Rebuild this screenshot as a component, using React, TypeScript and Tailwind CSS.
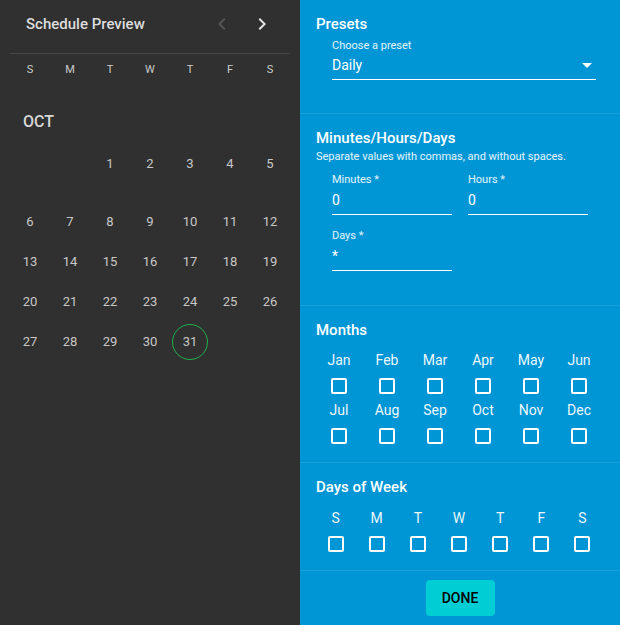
import React from "react";

const weekHeaders = ["S", "M", "T", "W", "T", "F", "S"];
const rows: (number | null)[][] = [
  [null, null, 1, 2, 3, 4, 5],
  [6, 7, 8, 9, 10, 11, 12],
  [13, 14, 15, 16, 17, 18, 19],
  [20, 21, 22, 23, 24, 25, 26],
  [27, 28, 29, 30, 31, null, null],
];
const months = ["Jan", "Feb", "Mar", "Apr", "May", "Jun", "Jul", "Aug", "Sep", "Oct", "Nov", "Dec"];

function Box() {
  return <div className="w-4 h-4 border-2 border-white rounded-[2px]" />;
}

function Field({ label, value, className }: { label: string; value: string; className?: string }) {
  return (
    <div className={"flex flex-col " + (className ?? "")}>
      <div className="text-[11px] leading-[14px] text-white/90">{label}</div>
      <div className="mt-[3px] text-[14px] leading-[20px] pb-[4px] border-b border-white text-white">{value}</div>
    </div>
  );
}

export default function App() {
  return (
    <div className="flex w-[620px] h-[625px] overflow-hidden" style={{ fontFamily: "Roboto, 'Liberation Sans', sans-serif" }}>
      {/* Left panel */}
      <div className="w-[300px] h-full bg-[#303030] flex flex-col">
        <div className="h-[48px] flex items-center pl-[26px] pr-[18px]">
          <div className="flex-1 text-[15px] font-medium text-[#dddddd] leading-[20px]">Schedule Preview</div>
          <div className="w-10 h-10 flex items-center justify-center">
            <svg width="24" height="24" viewBox="0 0 24 24" fill="#555555">
              <path d="M15.41 7.41L14 6l-6 6 6 6 1.41-1.41L10.83 12z" />
            </svg>
          </div>
          <div className="w-10 h-10 flex items-center justify-center">
            <svg width="24" height="24" viewBox="0 0 24 24" fill="#e6e6e6">
              <path d="M10 6L8.59 7.41 13.17 12l-4.58 4.59L10 18l6-6z" />
            </svg>
          </div>
        </div>
        <div className="mx-[10px] mt-[5px] h-px bg-[#474747]" />
        <div className="mx-[10px] grid grid-cols-7 h-[32px] items-center">
          {weekHeaders.map((d, i) => (
            <div key={i} className="text-center text-[11px] text-[#cbcbcb]">{d}</div>
          ))}
        </div>
        <div className="ml-[23px] mt-[26px] h-[20px] leading-[20px] text-[16px] font-medium text-[#d6d6d6]">OCT</div>
        <div className="mx-[10px] mt-[12px] flex flex-col">
          {rows.map((r, ri) => (
            <div key={ri} className={"grid grid-cols-7 h-[40px] " + (ri === 0 ? "mb-[18px]" : "")}>
              {r.map((d, ci) => (
                <div key={ci} className="flex items-center justify-center">
                  {d !== null && (
                    <div
                      className={
                        "w-9 h-9 rounded-full flex items-center justify-center text-[13px] text-[#c8c8c8] " +
                        (d === 31 ? "border border-[#1fb44a]" : "")
                      }
                    >
                      {d}
                    </div>
                  )}
                </div>
              ))}
            </div>
          ))}
        </div>
      </div>

      {/* Right panel */}
      <div className="w-[320px] h-full bg-[#0096d6] flex flex-col text-white">
        {/* Presets */}
        <div className="h-[114px] border-b border-white/10 px-4 pt-[14px]">
          <div className="text-[15px] font-medium leading-[20px]">Presets</div>
          <div className="ml-4 mr-2 mt-[5px]">
            <div className="text-[11px] leading-[13px] text-white/90">Choose a preset</div>
            <div className="relative mt-[3px] text-[14px] leading-[20px] pb-[4px] border-b border-white">
              Daily
              <svg className="absolute right-[-3px] top-[-2px]" width="24" height="24" viewBox="0 0 24 24" fill="white">
                <path d="M7 10l5 5 5-5z" />
              </svg>
            </div>
          </div>
        </div>

        {/* Minutes/Hours/Days */}
        <div className="h-[192px] border-b border-white/10 px-4 pt-[14px]">
          <div className="text-[15px] font-medium leading-[20px]">Minutes/Hours/Days</div>
          <div className="mt-[2px] text-[11px] leading-[13px] text-white/90">Separate values with commas, and without spaces.</div>
          <div className="ml-4 mt-[10px] flex gap-4">
            <Field label="Minutes *" value="0" className="w-[120px]" />
            <Field label="Hours *" value="0" className="w-[120px]" />
          </div>
          <div className="ml-4 mt-[14px] flex">
            <Field label="Days *" value="*" className="w-[120px]" />
          </div>
        </div>

        {/* Months */}
        <div className="h-[157px] border-b border-white/10 px-4 pt-[14px]">
          <div className="text-[15px] font-medium leading-[20px]">Months</div>
          <div className="-ml-px mt-[10px] w-[288px] grid grid-cols-6 gap-y-[6px]">
            {months.map((m) => (
              <div key={m} className="flex flex-col items-center">
                <div className="text-[14px] leading-[20px] text-white/95">{m}</div>
                <div className="mt-[8px]">
                  <Box />
                </div>
              </div>
            ))}
          </div>
        </div>

        {/* Days of Week */}
        <div className="h-[108px] border-b border-white/10 px-4 pt-[14px]">
          <div className="text-[15px] font-medium leading-[20px]">Days of Week</div>
          <div className="-ml-px mt-[11px] w-[288px] grid grid-cols-7">
            {weekHeaders.map((d, i) => (
              <div key={i} className="flex flex-col items-center">
                <div className="text-[14px] leading-[20px] text-white/95">{d}</div>
                <div className="mt-[8px]">
                  <Box />
                </div>
              </div>
            ))}
          </div>
        </div>

        {/* Done */}
        <div className="flex-1 flex justify-center pt-[9px]">
          <button className="h-[36px] w-[69px] rounded-[4px] bg-[#00cdd4] text-black text-[14px] font-medium">
            DONE
          </button>
        </div>
      </div>
    </div>
  );
}
